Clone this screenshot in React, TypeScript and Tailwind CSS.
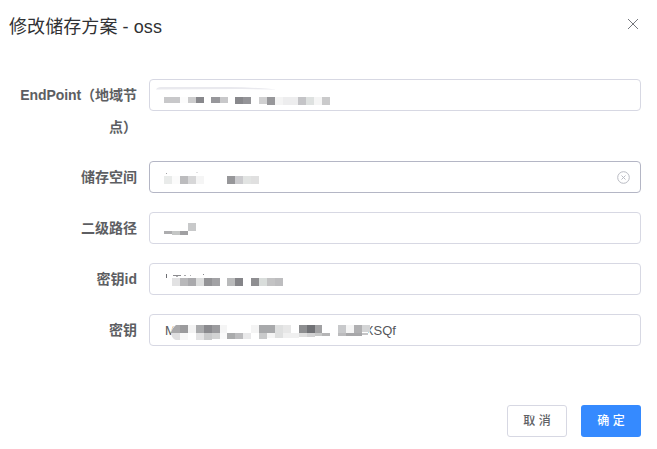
import type { ReactNode } from "react";

type Block = [x: number, y: number, w: number, h: number, fill: string];

const endpointBlocks: Block[] = [
  [15, 18, 16, 6, "#c8c8ca"],
  [31, 18, 8, 6, "#fcfcfc"],
  [39, 18, 8, 6, "#cccccd"],
  [47, 18, 8, 6, "#88888c"],
  [62, 18, 9, 6, "#97979b"],
  [71, 18, 8, 6, "#c8c8ca"],
  [86, 18, 8, 7, "#88888c"],
  [94, 18, 8, 7, "#949498"],
  [110, 18, 8, 7, "#d0d0d1"],
  [118, 18, 8, 8, "#97979a"],
  [126, 18, 8, 8, "#f4f4f4"],
  [134, 18, 15, 8, "#ededee"],
  [149, 18, 8, 8, "#c4c4c7"],
  [157, 18, 8, 8, "#dee1e0"],
  [165, 18, 8, 8, "#f5f5f5"],
  [173, 18, 8, 8, "#cacacb"],
];

const bucketBlocks: Block[] = [
  [17, 12, 1, 1, "#a4a4a6"],
  [47, 11, 2, 1, "#e2e2e3"],
  [15, 15, 8, 8, "#e9ebea"],
  [23, 15, 8, 8, "#fbfbfb"],
  [31, 15, 8, 8, "#bcbcbe"],
  [39, 15, 8, 8, "#d7d7d8"],
  [47, 15, 8, 8, "#f5f5f5"],
  [78, 15, 8, 8, "#97979a"],
  [86, 15, 8, 8, "#cbcbce"],
  [94, 15, 8, 8, "#e2e4e3"],
  [102, 15, 8, 8, "#e0e0e0"],
];

const pathBlocks: Block[] = [
  [15, 19, 8, 3, "#adadaf"],
  [23, 19, 8, 4, "#c4c6c5"],
  [31, 19, 8, 4, "#a0a0a2"],
  [39, 11, 8, 8, "#c8c9ca"],
];

const keyIdBlocks: Block[] = [
  [17, 11, 1, 4, "#6e6f73"],
  [24, 12, 8, 1, "#8b8b8f"],
  [27, 13, 2, 1, "#b0b0b2"],
  [35, 12, 2, 1, "#a9a9ac"],
  [41, 12, 1, 1, "#b0b0b2"],
  [54, 11, 1, 1, "#88888c"],
  [23, 15, 8, 8, "#e2e2e3"],
  [31, 15, 8, 8, "#b8b8ba"],
  [39, 15, 8, 8, "#a9a9ac"],
  [47, 15, 8, 8, "#dcdddd"],
  [55, 15, 8, 8, "#939396"],
  [63, 15, 8, 8, "#a2a2a5"],
  [78, 15, 8, 8, "#b9babb"],
  [86, 15, 8, 8, "#858589"],
  [102, 15, 8, 8, "#8e8e91"],
  [110, 15, 8, 8, "#d9dddb"],
  [118, 15, 8, 8, "#c3c3c4"],
  [126, 15, 8, 8, "#bdbdbf"],
];

const secretBlocks: Block[] = [
  [31, 11, 8, 8, "#9b9b9d"],
  [39, 11, 8, 8, "#f3f3f3"],
  [47, 11, 8, 8, "#a9aaac"],
  [55, 11, 8, 8, "#8a8a8e"],
  [63, 11, 8, 8, "#9b9b9e"],
  [71, 11, 7, 8, "#f5f5f5"],
  [102, 11, 8, 8, "#f4f4f4"],
  [110, 11, 16, 8, "#a8a9ab"],
  [126, 11, 8, 8, "#dfe0e0"],
  [134, 11, 8, 8, "#e7e7e7"],
  [150, 11, 8, 8, "#8d8e90"],
  [158, 11, 8, 8, "#707175"],
  [166, 11, 7, 8, "#a1a1a3"],
  [189, 11, 8, 8, "#c8c9cb"],
  [197, 11, 8, 8, "#f5f5f5"],
  [205, 11, 8, 8, "#b0b0b2"],
  [213, 11, 8, 7, "#d4d5d6"],
  [31, 19, 8, 7, "#f7f7f7"],
  [47, 19, 8, 7, "#e3e3e4"],
  [55, 19, 8, 7, "#c9cacb"],
  [63, 19, 8, 6, "#d2d3d3"],
  [71, 19, 7, 6, "#fafafa"],
  [78, 19, 8, 6, "#aaabac"],
  [86, 19, 8, 6, "#bcbcbe"],
  [94, 19, 8, 6, "#e9e9ea"],
  [110, 19, 8, 6, "#c9cacb"],
  [118, 19, 8, 5, "#f5f5f5"],
  [126, 19, 8, 5, "#dfe0e0"],
  [134, 19, 16, 5, "#f0f0f0"],
  [150, 19, 8, 4, "#dedede"],
  [158, 19, 8, 4, "#d2d2d3"],
  [166, 19, 7, 3, "#c7c8c8"],
  [173, 19, 8, 3, "#b5b5b6"],
  [189, 19, 8, 3, "#bbbbbd"],
  [197, 19, 16, 3, "#a7a7a9"],
  [213, 19, 6, 2, "#c4c4c6"],
];

// Pixelated cover laid over a sensitive value
function Mosaic({ blocks, children }: { blocks: Block[]; children?: ReactNode }) {
  return (
    <svg
      className="pointer-events-none absolute -left-px -top-px"
      width="300"
      height="32"
      viewBox="0 0 300 32"
      aria-hidden="true"
    >
      {children}
      {blocks.map(([x, y, w, h, fill]) => (
        <rect key={`${x}-${y}`} x={x} y={y} width={w} height={h} fill={fill} />
      ))}
    </svg>
  );
}

function Field({
  label,
  active = false,
  children,
}: {
  label: ReactNode;
  active?: boolean;
  children: ReactNode;
}) {
  return (
    <div className="flex items-start">
      <div className="w-[149px] shrink-0 pr-3 text-right text-sm leading-8 font-bold text-[#5d5e62]">
        {label}
      </div>
      <div
        className={`relative flex h-8 flex-1 items-center rounded border bg-white px-[15px] text-[13px] text-[#55565a] ${
          active ? "border-[#b4b6c5]" : "border-[#d7d8e3]"
        }`}
      >
        {children}
      </div>
    </div>
  );
}

export default function App() {
  return (
    <div className="h-[449px] w-[657px] bg-white pr-4 font-['Liberation_Sans','Noto_Sans_CJK_SC',sans-serif]">
      <header className="flex h-[79px] items-start justify-between pt-[15px] pl-[9px]">
        <h1 className="text-lg leading-6 tracking-[0.08px] text-[#303133]">
          修改储存方案 - oss
        </h1>
        <button type="button" aria-label="Close" className="mt-1 mr-[3px]">
          <svg width="10" height="10" viewBox="0 0 10 10" stroke="#75777d" strokeWidth="1">
            <path d="M0 0 10 10M10 0 0 10" />
          </svg>
        </button>
      </header>

      <form>
        <div className="mb-[18px]">
          <Field
            label={
              <>
                <span className="tracking-[-0.1px]">EndPoint</span>（地域节
                <br />
                点）
              </>
            }
          >
            <Mosaic blocks={endpointBlocks}>
              <path d="M7 10.5Q8 8 12 8L80 8Q108 8.5 128 10.5L92 10Z" fill="#e9e9ee" />
            </Mosaic>
          </Field>
        </div>
        <div className="flex flex-col gap-[19px]">
          <Field label="储存空间" active>
            <Mosaic blocks={bucketBlocks} />
            <svg
              className="-mr-[5px] ml-auto"
              width="13"
              height="13"
              viewBox="0 0 13 13"
              fill="none"
              stroke="#b9bbc3"
            >
              <circle cx="6.5" cy="6.5" r="5.8" />
              <path d="M4.5 4.5l4 4M8.5 4.5l-4 4" />
            </svg>
          </Field>
          <Field label="二级路径">
            <Mosaic blocks={pathBlocks} />
          </Field>
          <Field label="密钥id">
            <Mosaic blocks={keyIdBlocks} />
          </Field>
          <Field label="密钥">
            <span className="pt-px">M</span>
            <span className="ml-[189px] pt-px">XSQf</span>
            <Mosaic blocks={secretBlocks}>
              <path d="M25 11H219V23H25L22 17Z" fill="#fff" />
              <path d="M31 11H27Q23 14 22 19H31Z" fill="#a8a8aa" />
              <path d="M22 19H31V26H27Q23 25 22 19Z" fill="#dfdfe0" />
            </Mosaic>
          </Field>
        </div>
      </form>

      <footer className="mt-[59px] flex justify-end gap-[14px] text-xs font-medium">
        <button
          type="button"
          className="h-8 w-[60px] rounded-[3px] border border-[#d7d8e3] bg-white text-[#606266]"
        >
          取 消
        </button>
        <button type="button" className="h-8 w-[60px] rounded-[3px] bg-[#358aff] text-white">
          确 定
        </button>
      </footer>
    </div>
  );
}
